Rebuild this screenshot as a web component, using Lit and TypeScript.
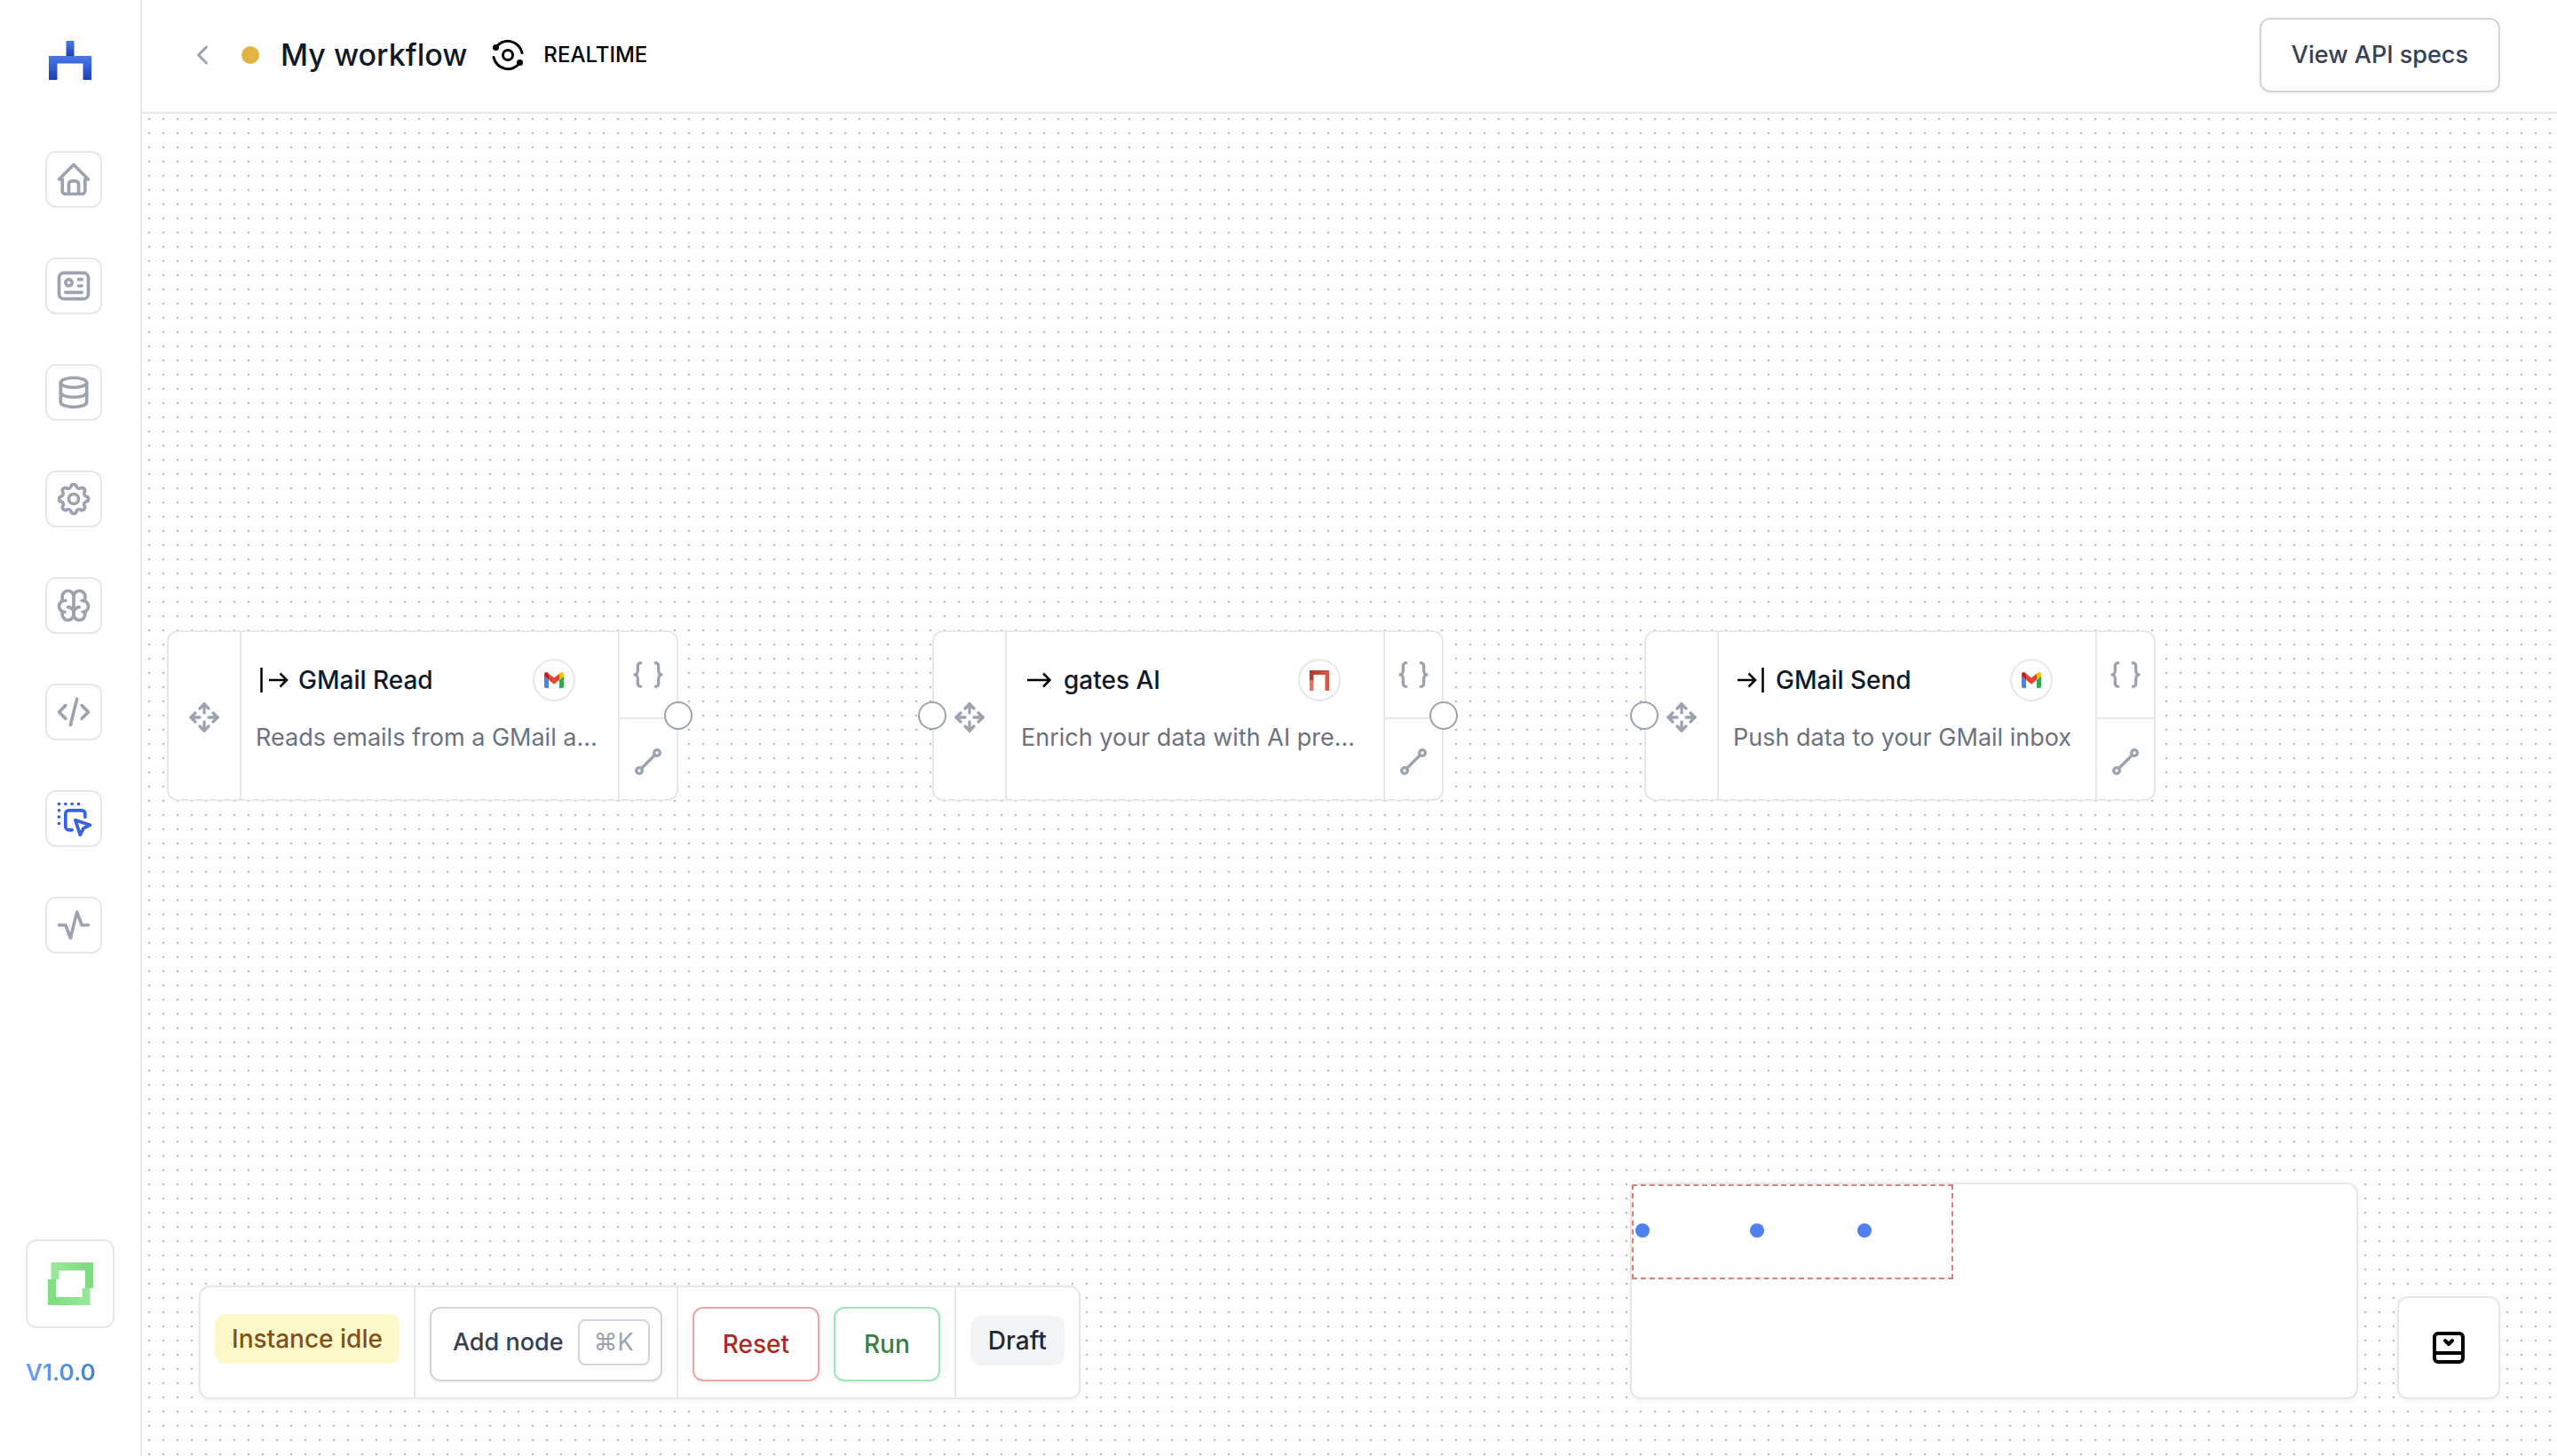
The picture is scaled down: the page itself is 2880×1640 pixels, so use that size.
import { LitElement, html, css, svg, nothing } from "lit";
import { customElement, property } from "lit/decorators.js";

const ICONS: Record<string, string[]> = {
  home: [
    "M5 12l-2 0l9 -9l9 9l-2 0",
    "M5 12v7a2 2 0 0 0 2 2h10a2 2 0 0 0 2 -2v-7",
    "M9 21v-6a2 2 0 0 1 2 -2h2a2 2 0 0 1 2 2v6",
  ],
  id: [
    "M3 4m0 3a3 3 0 0 1 3 -3h12a3 3 0 0 1 3 3v10a3 3 0 0 1 -3 3h-12a3 3 0 0 1 -3 -3z",
    "M9 10m-2 0a2 2 0 1 0 4 0a2 2 0 1 0 -4 0",
    "M15 8l2 0",
    "M15 12l2 0",
    "M7 16l10 0",
  ],
  database: [
    "M12 6m-8 0a8 3 0 1 0 16 0a8 3 0 1 0 -16 0",
    "M4 6v6a8 3 0 0 0 16 0v-6",
    "M4 12v6a8 3 0 0 0 16 0v-6",
  ],
  settings: [
    "M10.325 4.317c.426 -1.756 2.924 -1.756 3.35 0a1.724 1.724 0 0 0 2.573 1.066c1.543 -.94 3.31 .826 2.37 2.37a1.724 1.724 0 0 0 1.065 2.572c1.756 .426 1.756 2.924 0 3.35a1.724 1.724 0 0 0 -1.066 2.573c.94 1.543 -.826 3.31 -2.37 2.37a1.724 1.724 0 0 0 -2.572 1.065c-.426 1.756 -2.924 1.756 -3.35 0a1.724 1.724 0 0 0 -2.573 -1.066c-1.543 .94 -3.31 -.826 -2.37 -2.37a1.724 1.724 0 0 0 -1.065 -2.572c-1.756 -.426 -1.756 -2.924 0 -3.35a1.724 1.724 0 0 0 1.066 -2.573c-.94 -1.543 .826 -3.31 2.37 -2.37c1 .608 2.296 .07 2.572 -1.065z",
    "M9 12a3 3 0 1 0 6 0a3 3 0 0 0 -6 0",
  ],
  brain: [
    "M15.5 13a3.5 3.5 0 0 0 -3.5 3.5v1a3.5 3.5 0 0 0 7 0v-1.8",
    "M8.5 13a3.5 3.5 0 0 1 3.5 3.5v1a3.5 3.5 0 0 1 -7 0v-1.8",
    "M17.5 16a3.5 3.5 0 0 0 0 -7h-.5",
    "M19 9.3v-2.8a3.5 3.5 0 0 0 -7 0",
    "M6.5 16a3.5 3.5 0 0 1 0 -7h.5",
    "M5 9.3v-2.8a3.5 3.5 0 0 1 7 0v10",
  ],
  code: ["M7 8l-4 4l4 4", "M17 8l4 4l-4 4", "M14 4l-4 16"],
  dragDrop: [
    "M19 11v-2a2 2 0 0 0 -2 -2h-8a2 2 0 0 0 -2 2v8a2 2 0 0 0 2 2h2",
    "M13 13l9 3l-4 2l-2 4l-3 -9",
    "M3 3l0 .01",
    "M7 3l0 .01",
    "M11 3l0 .01",
    "M15 3l0 .01",
    "M3 7l0 .01",
    "M3 11l0 .01",
    "M3 15l0 .01",
  ],
  activity: ["M3 12h4l3 8l4 -16l3 8h4"],
  chevronLeft: ["M15 6l-6 6l6 6"],
  move: [
    "M18 9l3 3l-3 3",
    "M15 12h6",
    "M6 9l-3 3l3 3",
    "M3 12h6",
    "M9 18l3 3l3 -3",
    "M12 15v6",
    "M15 6l-3 -3l-3 3",
    "M12 3v6",
  ],
  braces: [
    "M7 4a2 2 0 0 0 -2 2v3a2 3 0 0 1 -2 3a2 3 0 0 1 2 3v3a2 2 0 0 0 2 2",
    "M17 4a2 2 0 0 1 2 2v3a2 3 0 0 0 2 3a2 3 0 0 0 -2 3v3a2 2 0 0 1 -2 2",
  ],
  line: [
    "M6 18m-2 0a2 2 0 1 0 4 0a2 2 0 1 0 -4 0",
    "M18 6m-2 0a2 2 0 1 0 4 0a2 2 0 1 0 -4 0",
    "M7.5 16.5l9 -9",
  ],
  collapse: [
    "M20 6v12a2 2 0 0 1 -2 2h-12a2 2 0 0 1 -2 -2v-12a2 2 0 0 1 2 -2h12a2 2 0 0 1 2 2z",
    "M20 15h-16",
    "M14 8l-2 2l-2 -2",
  ],
};

const icon = (name: string, size: number) => html`
  <svg width=${size} height=${size} viewBox="0 0 24 24" fill="none" stroke="currentColor"
    stroke-width="2" stroke-linecap="round" stroke-linejoin="round" aria-hidden="true">
    ${ICONS[name].map((d) => svg`<path d=${d}></path>`)}
  </svg>`;

type Kind = "source" | "transform" | "target";

const KIND_PATHS: Record<Kind, string> = {
  source: "M6.5 6v28M15 20h19.500M27.500 12.500l7.500 7.500l-7.500 7.500",
  transform: "M7 20h25M25 12.500l7.500 7.500l-7.500 7.500",
  target: "M33.500 6v28M5 20h19.500M17.500 12.500l7.500 7.500l-7.500 7.500",
};

const gmailLogo = html`
  <svg width="22" height="18" viewBox="52 42 88 66" preserveAspectRatio="none" aria-hidden="true">
    <path fill="#4285f4" d="M58 108h14V74L52 59v43c0 3.320 2.690 6 6 6"></path>
    <path fill="#34a853" d="M120 108h14c3.320 0 6-2.690 6-6V59l-20 15"></path>
    <path fill="#fbbc04" d="M120 48v26l20-15v-8c0-7.420-8.470-11.650-14.400-7.200"></path>
    <path fill="#ea4335" d="M72 74V48l24 18 24-18v26L96 92"></path>
    <path fill="#c5221f" d="M52 51v8l20 15V48l-5.600-4.200c-5.940-4.450-14.400-.220-14.400 7.200"></path>
  </svg>`;

const gatesLogo = html`
  <svg width="22" height="23" viewBox="0 0 22 23" aria-hidden="true">
    <defs>
      <linearGradient id="gate-bar" x1="0" x2="1">
        <stop offset="0" stop-color="#a93a2e"></stop>
        <stop offset="1" stop-color="#d9594a"></stop>
      </linearGradient>
    </defs>
    <path fill="url(#gate-bar)" d="M0 0h22v5H4.500v7H0z"></path>
    <path fill="#d65848" d="M17.500 4.500H22V23h-4.500z"></path>
    <path fill="#ea7060" d="M0 11h4.500v12H0z"></path>
  </svg>`;

interface FlowNode {
  title: string;
  text: string;
  kind: Kind;
  app: "gmail" | "gates";
  x: number;
  y: number;
  mapX: number;
}

const NODES: FlowNode[] = [
  { title: "GMail Read", text: "Reads emails from a GMail a...", kind: "source", app: "gmail", x: 28, y: 582, mapX: 4 },
  { title: "gates AI", text: "Enrich your data with AI pre...", kind: "transform", app: "gates", x: 890, y: 582, mapX: 133 },
  { title: "GMail Send", text: "Push data to your GMail inbox", kind: "target", app: "gmail", x: 1692, y: 582, mapX: 254 },
];

const NAV = [
  ["home", "Home"],
  ["id", "Accounts"],
  ["database", "Data"],
  ["settings", "Settings"],
  ["brain", "Models"],
  ["code", "Code"],
  ["dragDrop", "Workflows"],
  ["activity", "Activity"],
];

const base = css`
  *, *::before, *::after { box-sizing: border-box; }
  svg { display: block; flex: none; }
  button { font: inherit; color: inherit; background: none; border: 0; padding: 0; margin: 0; cursor: pointer; }
  a { color: inherit; text-decoration: none; }
  h1, h2, p { margin: 0; font: inherit; }
`;

@customElement("side-bar")
class SideBar extends LitElement {
  static styles = [
    base,
    css`
      :host {
        display: flex; flex-direction: column; flex: none; box-sizing: border-box;
        width: 160px; padding: 46px 29px 78px;
        background: #fff; border-right: 2px solid #e5e7eb;
      }
      .logo { align-self: center; }
      .nav { display: flex; flex-direction: column; gap: 56px; margin: 80px 0 0 22px; }
      .item {
        display: flex; align-items: center; justify-content: center;
        width: 64px; height: 64px; border: 2px solid #e5e7eb; border-radius: 12px; color: #9ca3af;
      }
      .item.active { color: #3662e3; }
      .foot { margin-top: auto; display: flex; flex-direction: column; gap: 34px; }
      .avatar {
        display: flex; align-items: center; justify-content: center;
        width: 100px; height: 100px; border: 2px solid #e5e7eb; border-radius: 12px;
      }
      .version {
        align-self: flex-start; font-size: 26px; line-height: 32px; font-weight: 600;
        color: transparent; background: linear-gradient(90deg, #709ff5, #4283c6);
        background-clip: text; -webkit-background-clip: text;
      }
    `,
  ];

  render() {
    return html`
      <a class="logo" href="#" aria-label="Start">
        <svg width="48" height="44" viewBox="0 0 48 44" aria-hidden="true">
          <defs>
            <linearGradient id="stem" x2="0" y2="1">
              <stop offset="0" stop-color="#4b7ae8"></stop><stop offset="1" stop-color="#1d3fae"></stop>
            </linearGradient>
            <linearGradient id="gate" x2="0" y2="1">
              <stop offset="0" stop-color="#4878e8"></stop><stop offset=".4" stop-color="#3663d8"></stop>
              <stop offset="1" stop-color="#1c3fb0"></stop>
            </linearGradient>
          </defs>
          <path fill="url(#stem)" d="M19.500 0h9v18h-9z"></path>
          <path fill="url(#gate)" d="M0 17h48v27h-9.500V25.500h-29V44H0z"></path>
        </svg>
      </a>
      <nav class="nav">
        ${NAV.map(
          ([name, label]) => html`
            <a class="item ${name === "dragDrop" ? "active" : ""}" href="#${label.toLowerCase()}" aria-label=${label}>
              ${icon(name, 44)}
            </a>`
        )}
      </nav>
      <div class="foot">
        <button class="avatar" aria-label="Profile">
          <svg width="51" height="48" viewBox="0 0 51 48" aria-hidden="true">
            <defs>
              <linearGradient id="upper"><stop offset=".2" stop-color="#95e796"></stop><stop offset=".8" stop-color="#82dc82"></stop></linearGradient>
              <linearGradient id="lower"><stop offset=".2" stop-color="#82dc82"></stop><stop offset=".8" stop-color="#95e796"></stop></linearGradient>
            </defs>
            <path fill="url(#upper)" d="M3.500 0H51v29h-9V9H12.500v10h-9z"></path>
            <path fill="url(#lower)" d="M0 19h9v20h29.500V29h9v19H0z"></path>
          </svg>
        </button>
        <span class="version">V1.0.0</span>
      </div>`;
  }
}

@customElement("flow-node")
class FlowNodeCard extends LitElement {
  @property({ attribute: false }) node!: FlowNode;

  static styles = [
    base,
    css`
      :host { display: block; width: 576px; }
      .card {
        position: relative; display: flex; height: 192px;
        background: #fff; border: 2px solid #e5e7eb; border-radius: 12px;
      }
      .grip {
        width: 82px; flex: none; display: flex; align-items: center; justify-content: center;
        padding-top: 4px; border-right: 2px solid #e5e7eb; color: #9ca3af; cursor: grab;
      }
      .body { flex: 1; min-width: 0; padding: 30px 16px 0; display: flex; flex-direction: column; gap: 21px; }
      .head { display: flex; align-items: center; gap: 8px; height: 48px; }
      .title { flex: 1; font-size: 28px; line-height: 40px; font-weight: 500; color: #111827; }
      .app {
        width: 48px; height: 48px; margin-right: 32px; flex: none;
        display: flex; align-items: center; justify-content: center;
        border: 2px solid #e5e7eb; border-radius: 50%;
      }
      .text { font-size: 27px; line-height: 40px; color: #6b7280; white-space: nowrap; }
      .tools { width: 66px; flex: none; display: flex; flex-direction: column; border-left: 2px solid #e5e7eb; color: #9ca3af; }
      .tool { display: flex; justify-content: center; align-items: flex-start; padding-top: 28px; flex: 1; }
      .tool.first { flex: none; height: 98px; border-bottom: 2px solid #e5e7eb; }
      .handle {
        position: absolute; top: 78px; width: 32px; height: 32px;
        background: #fff; border: 2px solid #9ca3af; border-radius: 50%;
      }
      .handle.in { left: -18px; }
      .handle.out { right: -18px; }
    `,
  ];

  render() {
    const n = this.node;
    return html`
      <article class="card">
        <button class="grip" aria-label="Move node">${icon("move", 40)}</button>
        <div class="body">
          <div class="head">
            <svg width="40" height="40" viewBox="0 0 40 40" fill="none" stroke="#000" stroke-width="2.500" aria-hidden="true">
              <path d=${KIND_PATHS[n.kind]}></path>
            </svg>
            <h2 class="title">${n.title}</h2>
            <span class="app">${n.app === "gmail" ? gmailLogo : gatesLogo}</span>
          </div>
          <p class="text">${n.text}</p>
        </div>
        <div class="tools">
          <button class="tool first" aria-label="Show data">${icon("braces", 40)}</button>
          <button class="tool" aria-label="Connect">${icon("line", 40)}</button>
        </div>
        ${n.kind !== "source" ? html`<button class="handle in" aria-label="Input"></button>` : nothing}
        ${n.kind !== "target" ? html`<button class="handle out" aria-label="Output"></button>` : nothing}
      </article>`;
  }
}

@customElement("app-root")
class AppRoot extends LitElement {
  static styles = [
    base,
    css`
      :host {
        display: flex; min-height: 100vh; background: #fff; color: #111827;
        font-family: Inter, "Liberation Sans", sans-serif; font-size: 28px; line-height: 40px;
      }
      .main { flex: 1; min-width: 0; display: flex; flex-direction: column; }
      .bar {
        display: flex; align-items: center; height: 128px; padding: 0 64px 2px 50px;
        border-bottom: 2px solid #e5e7eb; background: #fff;
      }
      .back { color: #9ca3af; }
      .dot { width: 20px; height: 20px; margin: 0 24px 0 26px; border-radius: 50%; background: #e3b341; }
      .name { font-size: 34px; line-height: 56px; font-weight: 500; }
      .mode {
        display: flex; align-items: center; gap: 20px; margin-left: 26px;
        font-size: 24px; line-height: 32px; font-weight: 500; color: #000;
      }
      .btn {
        display: flex; align-items: center; height: 84px; padding: 0 32px;
        border: 2px solid #d1d5db; border-radius: 12px; background: #fff;
        font-weight: 500; color: #374151; box-shadow: 0 2px 4px rgba(0, 0, 0, 0.05);
      }
      .btn.specs { margin-left: auto; padding: 0 34px; font-size: 27px; }
      .btn.add { padding: 0 12px 4px 24px; gap: 16px; font-size: 27px; }
      .btn.reset { border-color: #f1a5a4; color: #a92c25; }
      .btn.run { border-color: #9ceaae; color: #3c7e45; }
      .kbd {
        height: 52px; padding: 0 16px; border: 2px solid #d1d5db; border-radius: 8px;
        font-family: inherit; font-size: 27px; line-height: 48px; font-weight: 400; color: #9ca3af;
      }
      .canvas {
        position: relative; flex: 1; display: flex; align-items: flex-end; padding: 0 64px 64px;
        background: #fff radial-gradient(circle, #a9b4c6 1px, transparent 1px) 0 -2px / 16px 16px;
      }
      .node { position: absolute; }
      .panel {
        background: #fff; border: 2px solid #e5e7eb; border-radius: 12px;
        box-shadow: 0 2px 6px rgba(0, 0, 0, 0.05);
      }
      .tools { display: flex; height: 128px; margin-right: auto; }
      .group { display: flex; align-items: flex-start; gap: 16px; padding: 22px 16px 0; }
      .group + .group { border-left: 2px solid #e5e7eb; }
      .group.status { padding-top: 30px; }
      .group.state { padding-top: 32px; }
      .badge { padding: 8px 20px; border-radius: 12px; font-weight: 500; }
      .badge.idle { padding: 8px 19px; background: #fef9c8; color: #80501f; }
      .badge.draft { background: #f3f4f6; color: #1f2937; }
      .map { position: relative; width: 820px; height: 244px; }
      .view { position: absolute; left: 0; top: 0; width: 362px; height: 107px; border: 2px dashed #e77a75; }
      .pin { position: absolute; top: 44px; width: 16px; height: 16px; border-radius: 50%; background: #4f81ee; }
      .collapse {
        display: flex; align-items: center; justify-content: center;
        width: 116px; height: 116px; margin-left: 44px; color: #000;
      }
    `,
  ];

  render() {
    return html`
      <side-bar></side-bar>
      <div class="main">
        <header class="bar">
          <a class="back" href="#workflows" aria-label="Back">${icon("chevronLeft", 36)}</a>
          <span class="dot"></span>
          <h1 class="name">My workflow</h1>
          <div class="mode">
            <svg width="40" height="40" viewBox="0 0 40 40" fill="none" stroke="#000" stroke-width="3" stroke-linecap="round" aria-hidden="true">
              <circle cx="20" cy="20" r="5.500"></circle>
              <path d="M6.200 12A16.300 16.300 0 0 1 36 17.500"></path>
              <path d="M33.800 28A16.300 16.300 0 0 1 4 22.500"></path>
              <circle cx="6.500" cy="11.500" r="3.500" fill="#000" stroke="none"></circle>
              <circle cx="33.500" cy="28.500" r="3.500" fill="#000" stroke="none"></circle>
            </svg>
            <span>REALTIME</span>
          </div>
          <button class="btn specs">View API specs</button>
        </header>
        <main class="canvas">
          ${NODES.map(
            (n) => html`<flow-node class="node" style="left:${n.x}px;top:${n.y}px" .node=${n}></flow-node>`
          )}
          <div class="tools panel">
            <div class="group status"><span class="badge idle">Instance idle</span></div>
            <div class="group"><button class="btn add">Add node <kbd class="kbd">⌘K</kbd></button></div>
            <div class="group">
              <button class="btn reset">Reset</button>
              <button class="btn run">Run</button>
            </div>
            <div class="group state"><span class="badge draft">Draft</span></div>
          </div>
          <div class="map panel">
            <div class="view"></div>
            ${NODES.map((n) => html`<span class="pin" style="left:${n.mapX}px"></span>`)}
          </div>
          <button class="collapse panel" aria-label="Collapse map">${icon("collapse", 48)}</button>
        </main>
      </div>`;
  }
}
